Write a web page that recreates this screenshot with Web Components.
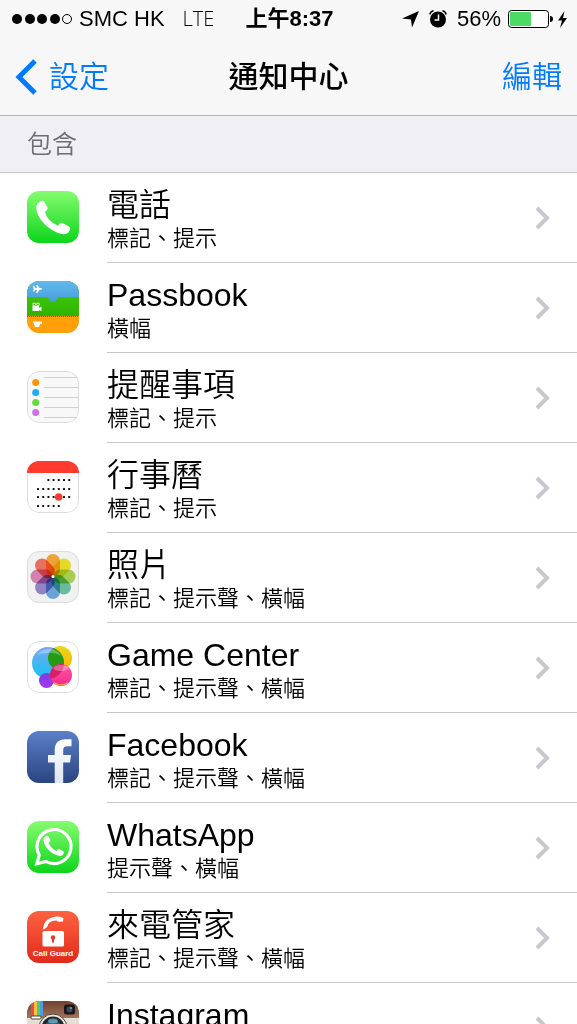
<!DOCTYPE html>
<html lang="zh-Hant">
<head>
<meta charset="utf-8">
<meta name="viewport" content="width=device-width, initial-scale=1">
<title>通知中心</title>
<style>
  body {
    margin: 0;
    background: #fff;
    color: #000;
    font-family: "Liberation Sans", "Noto Sans CJK TC", sans-serif;
    font-weight: 350;
  }
</style>
</head>
<body>
<settings-screen>
  <status-bar slot="top" carrier="SMC HK" network="LTE" time="上午8:37" battery="56"></status-bar>
  <nav-bar slot="top" back="設定" action="編輯">通知中心</nav-bar>
  <section-title>包含</section-title>
  <app-row icon="phone">電話<span slot="detail">標記、提示</span></app-row>
  <app-row icon="passbook">Passbook<span slot="detail">橫幅</span></app-row>
  <app-row icon="reminders">提醒事項<span slot="detail">標記、提示</span></app-row>
  <app-row icon="calendar">行事曆<span slot="detail">標記、提示</span></app-row>
  <app-row icon="photos">照片<span slot="detail">標記、提示聲、橫幅</span></app-row>
  <app-row icon="gamecenter">Game Center<span slot="detail">標記、提示聲、橫幅</span></app-row>
  <app-row icon="facebook">Facebook<span slot="detail">標記、提示聲、橫幅</span></app-row>
  <app-row icon="whatsapp">WhatsApp<span slot="detail">提示聲、橫幅</span></app-row>
  <app-row icon="callguard">來電管家<span slot="detail">標記、提示聲、橫幅</span></app-row>
  <app-row icon="instagram">Instagram</app-row>
</settings-screen>

<script>
// vertical gradient used as an icon background
const gradient = (id, from, to) => `
  <linearGradient id="${id}" x1="0" y1="0" x2="0" y2="1">
    <stop offset="0" stop-color="${from}"/><stop offset="1" stop-color="${to}"/>
  </linearGradient>`;

const handset = 'M10.5 12.5L14 10Q16 9 17.3 11L20.3 16Q21.3 18 19.6 19.4L17.8 21Q19 25.5 22.5 29Q26.5 33 31 34.8L32.6 32.6Q34 31.2 36 32.2L42 35.5Q43.8 36.8 43 38.6L41.3 41.6Q39.5 43.8 35 43Q25 41 16.5 32Q9 23.5 9.3 16Q9.4 13.6 10.5 12.5Z';

const petals = ['#f9a01b', '#f2e205', '#a5d13a', '#52bd95', '#5a9fdc', '#8a78c8', '#d775ad', '#f4604c'];

const dotRow = (y, from, to) => {
  let dots = '';
  for (let i = from; i <= to; i++) {
    dots += `<rect x="${10 + i * 5.2}" y="${y}" width="2" height="2" rx=".6"/>`;
  }
  return dots;
};

// white icons need a hairline so that they stand out from the page
const hairline = '<rect x=".5" y=".5" width="51" height="51" rx="11.5" fill="none" stroke="#dcdcdc"/>';

// every icon is drawn on a 52 x 52 grid
const icons = {
  phone: `
    <defs>${gradient('bg', '#86fc70', '#0cd51b')}</defs>
    <rect width="52" height="52" fill="url(#bg)"/>
    <path d="${handset}" fill="#fff"/>`,

  passbook: `
    <defs>${gradient('sky', '#62b9ef', '#489fd8')}${gradient('grass', '#4ad00a', '#2db400')}</defs>
    <rect width="52" height="52" fill="#ff9f0a"/>
    <rect width="52" height="35" fill="url(#grass)"/>
    <path d="M0 35.5H52" stroke="#1f8f0a" stroke-dasharray="1 1"/>
    <path d="M0 0H52V16H32Q30.500 16 30 18Q29 21 26 21Q23 21 22 18Q21.500 16 20 16H0Z" fill="url(#sky)"/>
    <g fill="#fff">
      <path d="M6 5H7L8.500 7H10L9 4H10.500L12.500 7H14.500Q15.500 8 14.500 8.700H12.500L10.500 12H9L10 8.700H8.500L7 10.500H6L6.700 8Z"/>
      <path d="M5.500 25H12V27L14.500 25.500V30L12 29V30H5.500Z"/>
      <path d="M6 40.500H15V43H13L12 46H8Z"/>
    </g>
    <g fill="none" stroke="#fff"><circle cx="7.2" cy="23.4" r="1.4"/><circle cx="11" cy="23.4" r="1.4"/></g>`,

  reminders: `
    <rect width="52" height="52" fill="#f8f8f8"/>
    <path d="M17 6.500H52M17 16.500H52M17 26.500H52M17 36.500H52M17 46.500H52" stroke="#d0d0d0"/>
    <circle cx="8.7" cy="11.5" r="3.5" fill="#ff9500"/>
    <circle cx="8.7" cy="21.5" r="3.5" fill="#1badf8"/>
    <circle cx="8.7" cy="31.5" r="3.5" fill="#63da38"/>
    <circle cx="8.7" cy="41.5" r="3.5" fill="#cc73e1"/>
    ${hairline}`,

  calendar: `
    <rect width="52" height="52" fill="#fff"/>
    ${hairline}
    <rect width="52" height="12" fill="#ff3b30"/>
    <g fill="#111">${dotRow(18, 2, 6)}${dotRow(27, 0, 6)}${dotRow(35, 0, 6)}${dotRow(44, 0, 4)}</g>
    <circle cx="31.7" cy="36" r="3.8" fill="#ff3b30"/>`,

  photos: `
    <rect width="52" height="52" fill="#f1f1f1"/>
    <g class="petals">${petals.map((color, i) =>
      `<rect x="19" y="3" width="14" height="22" rx="7" fill="${color}" transform="rotate(${i * 45} 26 25.5)"/>`).join('')}
    </g>
    <circle cx="26" cy="25.5" r="1.5" fill="#fff"/>
    ${hairline}`,

  gamecenter: `
    <defs>
      ${gradient('blue', '#7aa6f5', '#0fc5f2')}${gradient('yellow', '#e9d51c', '#ffb400')}
      ${gradient('pink', '#ff5aa8', '#f7288c')}${gradient('purple', '#7a3fe0', '#a433f5')}
      <clipPath id="ball"><circle cx="21" cy="22" r="16"/></clipPath>
    </defs>
    <rect width="52" height="52" fill="#fff"/>
    <circle cx="33" cy="17" r="12" fill="url(#yellow)"/>
    <circle cx="21" cy="22" r="16" fill="url(#blue)"/>
    <circle cx="33" cy="17" r="12" fill="#239b16" clip-path="url(#ball)"/>
    <circle cx="19.5" cy="39.5" r="7.5" fill="url(#purple)"/>
    <circle cx="34" cy="34" r="11" fill="url(#pink)"/>
    <circle cx="34" cy="34" r="11" fill="#d3206a" clip-path="url(#ball)"/>
    <path d="M10 14Q15 7 24 8Q31 9 34 15Q28 11 21 12Q14 12 10 14Z" fill="#fff" opacity=".3"/>
    <ellipse cx="34" cy="27" rx="7.5" ry="3" fill="#fff" opacity=".3"/>
    <path d="M27 42Q34 46 41 42" fill="none" stroke="#ff9a4a" stroke-width="1.5"/>
    ${hairline}`,

  facebook: `
    <defs>${gradient('bg', '#5b7fc9', '#2a4580')}${gradient('mark', '#fff', '#dfe4f1')}</defs>
    <rect width="52" height="52" fill="url(#bg)"/>
    <path d="M27.700 52V31.500H21V24H27.700V19.500C27.700 11.500 32 8.300 38.500 8.300H44.500V15.300H40.500C37.300 15.300 36.200 16.700 36.200 19.500V24H44L43 31.500H36.200V52Z" fill="url(#mark)"/>`,

  whatsapp: `
    <defs>${gradient('bg', '#86fc70', '#0cd51b')}</defs>
    <rect width="52" height="52" fill="url(#bg)"/>
    <path d="M9.800 42.800L12.300 34A17 17 0 1 1 18.800 40.400Z" fill="none" stroke="#fff" stroke-width="3.2"/>
    <path d="${handset}" fill="#fff" transform="translate(11 9) scale(.6)"/>`,

  callguard: `
    <defs>${gradient('bg', '#ff6240', '#e02a1c')}</defs>
    <rect width="52" height="52" fill="url(#bg)"/>
    <path d="M16.500 15.500Q18 7 29 5.500Q34 5 36.500 7.500L36 10.500L31 10.800L29.500 9.500Q23 9.500 21 13.500L20.500 15.500L17 18.500Q15 18 16.500 15.500Z" fill="#fff"/>
    <rect x="15.5" y="20" width="21.5" height="15.5" rx="1.5" fill="#fff"/>
    <circle cx="26" cy="26.500" r="2.2" fill="#e83828"/>
    <path d="M26 26V31.500" stroke="#e83828" stroke-width="2"/>
    <text x="26" y="45" text-anchor="middle">Call Guard</text>`,

  instagram: `
    <defs>${gradient('leather', '#6d4230', '#a4745a')}${gradient('body', '#f4efe6', '#cfc5b6')}</defs>
    <rect width="52" height="52" fill="url(#body)"/>
    <rect width="52" height="17" fill="url(#leather)"/>
    <rect x="4" width="3" height="15" fill="#ea4b4b"/>
    <rect x="7" width="3" height="15" fill="#f4c63c"/>
    <rect x="10" width="3" height="15" fill="#5cc46b"/>
    <rect x="13" width="3" height="15" fill="#4a9fe0"/>
    <rect x="4" y="15" width="10" height="3" rx="1" fill="#fff" stroke="#443"/>
    <rect x="37" y="3.5" width="11" height="10" rx="2.5" fill="#17181c"/>
    <circle cx="42.5" cy="8.5" r="3" fill="#3b4658"/>
    <circle cx="44" cy="7" r="1" fill="#8fa3bd"/>
    <circle cx="26" cy="27" r="14" fill="#e9e6e0" stroke="#4b4038"/>
    <circle cx="26" cy="27" r="11.5" fill="#23282e"/>
    <circle cx="26" cy="27" r="8" fill="#235a78"/>
    <ellipse cx="26" cy="20" rx="5" ry="2.5" fill="#7ab6cf" opacity=".7"/>`
};

class SettingsScreen extends HTMLElement {
  constructor() {
    super();
    this.attachShadow({ mode: 'open' });
    this.shadowRoot.innerHTML = `
      <style>
        :host {
          display: flex;
          flex-direction: column;
          height: 100vh;
        }
        header {
          background: #f7f7f8;
          border-bottom: 1px solid #b2b2b6;
        }
        main {
          flex: 1;
          min-height: 0;
          overflow-y: auto;
          scrollbar-width: none;
        }
      </style>
      <header><slot name="top"></slot></header>
      <main><slot></slot></main>
    `;
  }
}

class StatusBar extends HTMLElement {
  constructor() {
    super();
    this.attachShadow({ mode: 'open' });
  }

  connectedCallback() {
    this.render();
  }

  render() {
    const battery = Number(this.getAttribute('battery'));
    this.shadowRoot.innerHTML = `
      <style>
        :host {
          display: grid;
          grid-template-columns: 1fr auto 1fr;
          align-items: center;
          height: 38px;
          padding: 0 10px 0 12px;
          font-size: 22px;
          line-height: 38px;
          white-space: nowrap;
        }
        div {
          display: flex;
          align-items: center;
        }
        svg {
          display: block;
          flex: none;
        }
        .signal { margin-right: 6px; }
        .network {
          margin-left: 18px;
          font-family: "Open Sans", sans-serif;
          font-size: 20px;
        }
        .time { font-weight: 700; }
        .right { justify-content: flex-end; }
        .alarm { margin: 0 10px; }
        .battery { margin: 0 5px 0 7px; }
      </style>
      <div>
        <svg class="signal" width="61" height="12">
          <circle cx="5" cy="6" r="5"/><circle cx="18" cy="6" r="5"/>
          <circle cx="30" cy="6" r="5"/><circle cx="43" cy="6" r="5"/>
          <circle cx="55" cy="6" r="4.5" fill="none" stroke="#000"/>
        </svg>
        <span>${this.getAttribute('carrier')}</span>
        <span class="network">${this.getAttribute('network')}</span>
      </div>
      <div class="time">${this.getAttribute('time')}</div>
      <div class="right">
        <svg width="17" height="17"><path d="M17 0L10 16.500L9 8.500L0 7.500Z"/></svg>
        <svg class="alarm" width="18" height="18">
          <circle cx="9" cy="9.5" r="8"/>
          <path d="M0.800 4.500Q1.500 1.500 4.500 .8M17.200 4.500Q16.500 1.500 13.500 .8" fill="none" stroke="#000" stroke-width="1.5"/>
          <path d="M9.500 4.500V10H5.500" fill="none" stroke="#fff" stroke-width="1.5"/>
        </svg>
        <span>${battery}%</span>
        <svg class="battery" width="45" height="18">
          <rect x=".5" y=".5" width="40" height="17" rx="3" fill="#fff" stroke="#000"/>
          <rect x="2" y="2" width="${Math.round(battery * 37 / 100)}" height="14" rx="1" fill="#4cd964"/>
          <path d="M42 6Q45 6 45 9Q45 12 42 12Z"/>
        </svg>
        <svg width="9" height="17"><path d="M6.500 0L0 9.500H4L2 17L9 7H5Z"/></svg>
      </div>
    `;
  }
}

class NavBar extends HTMLElement {
  constructor() {
    super();
    this.attachShadow({ mode: 'open' });
  }

  connectedCallback() {
    this.shadowRoot.innerHTML = `
      <style>
        :host {
          display: grid;
          grid-template-columns: 1fr auto 1fr;
          align-items: center;
          height: 71px;
          padding: 0 15px 6px;
          font-size: 30px;
        }
        h1 {
          margin: 0;
          font-size: 30px;
          font-weight: 500;
        }
        a, button {
          display: flex;
          align-items: center;
          gap: 12px;
          padding: 0;
          border: 0;
          background: none;
          color: #007aff;
          font: inherit;
          text-decoration: none;
        }
        a { justify-self: start; }
        button { justify-self: end; }
        svg { margin-top: 6px; }
      </style>
      <a href="#back">
        <svg width="22" height="36"><path d="M20 2L4 18L20 34" fill="none" stroke="currentColor" stroke-width="5"/></svg>
        ${this.getAttribute('back')}
      </a>
      <h1><slot></slot></h1>
      <button type="button">${this.getAttribute('action')}</button>
    `;
  }
}

class SectionTitle extends HTMLElement {
  constructor() {
    super();
    this.attachShadow({ mode: 'open' });
    this.shadowRoot.innerHTML = `
      <style>
        :host {
          display: block;
          border-bottom: 1px solid #c8c7cc;
          background: #efeff4;
        }
        h2 {
          margin: 0;
          padding: 0 27px;
          color: #6d6d72;
          font-size: 25px;
          font-weight: inherit;
          line-height: 56px;
        }
      </style>
      <h2><slot></slot></h2>
    `;
  }
}

class AppIcon extends HTMLElement {
  constructor() {
    super();
    this.attachShadow({ mode: 'open' });
  }

  connectedCallback() {
    this.shadowRoot.innerHTML = `
      <style>
        :host {
          display: block;
          flex: none;
          width: 52px;
          height: 52px;
        }
        svg {
          display: block;
          border-radius: 12px;
        }
        .petals rect {
          mix-blend-mode: multiply;
          opacity: .85;
        }
        text {
          fill: #fff;
          font-size: 8px;
          font-weight: 700;
        }
      </style>
      <svg viewBox="0 0 52 52" width="52" height="52">${icons[this.getAttribute('name')]}</svg>
    `;
  }
}

class AppRow extends HTMLElement {
  constructor() {
    super();
    this.attachShadow({ mode: 'open' });
  }

  connectedCallback() {
    const icon = this.getAttribute('icon');
    this.shadowRoot.innerHTML = `
      <style>
        :host { display: block; }
        a {
          display: flex;
          gap: 28px;
          padding-left: 27px;
          color: inherit;
          text-decoration: none;
        }
        app-icon { margin-top: 18px; }
        .content {
          display: flex;
          flex: 1;
          align-items: center;
          justify-content: space-between;
          padding-right: 26px;
          border-bottom: 1px solid #c8c7cc;
        }
        .text {
          min-height: 68px;
          padding: 14px 0 7px;
        }
        .name {
          font-size: 32px;
          line-height: 36px;
        }
        .detail {
          font-size: 22px;
          line-height: 32px;
        }
        svg { flex: none; }
      </style>
      <a href="#${icon}">
        <app-icon name="${icon}"></app-icon>
        <div class="content">
          <div class="text">
            <div class="name"><slot></slot></div>
            <div class="detail"><slot name="detail"></slot></div>
          </div>
          <svg width="16" height="24"><path d="M2 2L12 12L2 22" fill="none" stroke="#c7c7cc" stroke-width="4"/></svg>
        </div>
      </a>
    `;
  }
}

customElements.define('settings-screen', SettingsScreen);
customElements.define('status-bar', StatusBar);
customElements.define('nav-bar', NavBar);
customElements.define('section-title', SectionTitle);
customElements.define('app-icon', AppIcon);
customElements.define('app-row', AppRow);
</script>
</body>
</html>
